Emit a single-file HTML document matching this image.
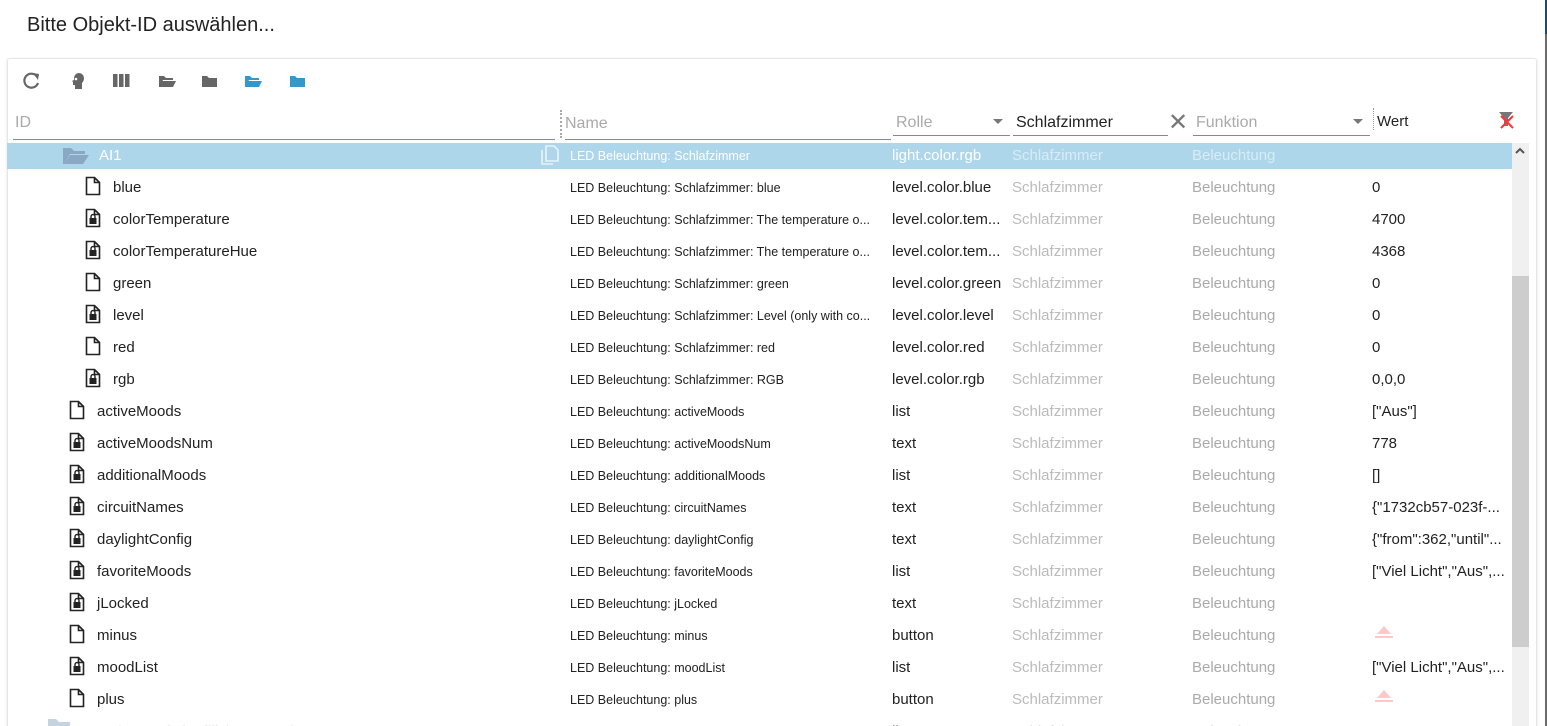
<!DOCTYPE html>
<html><head><meta charset="utf-8"><style>
*{margin:0;padding:0;box-sizing:border-box}
html,body{width:1547px;height:726px;overflow:hidden}
body{background:#fff;font-family:"Liberation Sans",sans-serif;position:relative}
.a{position:absolute;white-space:nowrap}
.title{left:27px;top:14px;font-size:20px;color:#222}
.card{left:7px;top:58px;width:1530px;height:700px;border:1px solid #e6e6e6;border-radius:3px;box-shadow:0 1px 3px rgba(0,0,0,.12)}
.edge{left:1545px;top:0;width:2px;height:726px;background:#6b6b6b}
.edge2{left:1545px;top:0;width:2px;height:34px;background:#1d4a6b}
.hdr{font-size:16px;color:#aaa}
.line{height:1px;background:#888}
.row{left:7px;width:1505px;height:32px;font-size:15px;color:#222}
.row span{position:absolute;top:9px;white-space:nowrap}
.nm{left:563px;font-size:12.5px!important;top:11px!important;max-width:320px;overflow:hidden}
.ro{left:885px;max-width:118px;overflow:hidden}
.rm{left:1005px;color:#bbb}
.fn{left:1185px;color:#aaa}
.va{left:1365px;max-width:138px;overflow:hidden}
.sel{background:#add6ea}
.sel span{color:#fff!important}
.ic{position:absolute;top:6px}
</style></head><body>
<div class="a edge"></div><div class="a edge2"></div>
<div class="a title">Bitte Objekt-ID auswählen...</div>
<div class="a card"></div>
<svg class="a" style="left:20px;top:70px" width="300" height="22" viewBox="0 0 300 22">
<path d="M17 6.5A7 7 0 1 0 18 13" fill="none" stroke="#666" stroke-width="2.2"/><path d="M13 3l6 1-1 6z" fill="#666"/>
<path d="M52 11l2-1v-2a5 5 0 0 1 10 0q0 3-2 5v6h-7v-4h-2v-3l-1-1z" fill="#666"/><circle cx="56" cy="9" r="1.3" fill="#fff"/>
<rect x="93" y="4" width="4.5" height="13" fill="#666"/><rect x="99" y="4" width="4.5" height="13" fill="#666"/><rect x="105" y="4" width="4.5" height="13" fill="#666"/>
<path d="M139 6h5l2 2h7v2h-10l-3 7h-1z M142 11h14l-3 6h-14z" fill="#666"/>
<path d="M182 6h5l2 2h8v9h-15z" fill="#666"/>
<path d="M225 6h5l2 2h7v2h-10l-3 7h-1z M228 11h14l-3 6h-14z" fill="#3399cc"/>
<path d="M270 6h5l2 2h8v9h-15z" fill="#3399cc"/>
</svg>
<div class="a hdr" style="left:15px;top:114px">ID</div>
<div class="a line" style="left:13px;top:139px;width:542px"></div>
<div class="a" style="left:560px;top:110px;height:28px;border-left:2px dotted #aaa"></div>
<div class="a hdr" style="left:565px;top:115px">Name</div>
<div class="a line" style="left:565px;top:139px;width:326px"></div>
<div class="a hdr" style="left:896px;top:114px">Rolle</div>
<div class="a" style="left:993px;top:119px;border:5px solid transparent;border-top:5px solid #777"></div>
<div class="a line" style="left:893px;top:135px;width:117px"></div>
<div class="a" style="left:1016px;top:114px;font-size:16px;color:#222">Schlafzimmer</div>
<div class="a line" style="left:1013px;top:135px;width:155px"></div>
<div class="a" style="left:1168px;top:108px;font-size:24px;color:#777">✕</div>
<div class="a hdr" style="left:1196px;top:114px">Funktion</div>
<div class="a" style="left:1353px;top:119px;border:5px solid transparent;border-top:5px solid #777"></div>
<div class="a line" style="left:1193px;top:135px;width:177px"></div>
<div class="a" style="left:1373px;top:108px;height:22px;border-left:1px dotted #999"></div>
<div class="a" style="left:1377px;top:113px;font-size:15px;color:#222">Wert</div>
<svg class="a" style="left:1498px;top:111px" width="18" height="18"><path d="M1 1h14l-5 6v8h-4v-8z" fill="#777"/><path d="M3 5l12 12M15 5L3 17" stroke="#f33" stroke-width="2"/></svg>
<div class="a" style="left:1512px;top:143px;width:17px;height:583px;background:#f0f0f0"></div>
<div class="a" style="left:1512px;top:276px;width:17px;height:371px;background:#cdcdcd"></div>
<svg class="a" style="left:1514px;top:146px" width="12" height="10"><path d="M2 7l4-4 4 4" fill="none" stroke="#555" stroke-width="2"/></svg>
<div id="rows"></div>
<script>
const F='<svg class="ic" width="16" height="20" viewBox="0 0 16 20"><path d="M1.5 1.5h8l5 5v12h-13z M9.5 1.5v5h5" fill="none" stroke="#222" stroke-width="1.6"/></svg>';
const L='<svg class="ic" width="16" height="20" viewBox="0 0 16 20"><path d="M1.5 1.5h8l5 5v12h-13z M9.5 1.5v5h5" fill="none" stroke="#222" stroke-width="1.6"/><rect x="4.5" y="10" width="7" height="6" fill="#222"/><path d="M6 10V8.5a2 2 0 0 1 4 0V10" fill="none" stroke="#222" stroke-width="1.4"/></svg>';
const B='<svg width="22" height="16" viewBox="0 0 22 16"><path d="M4 10L11 2l7 8z" fill="#ffc7c7"/><rect x="2" y="12" width="18" height="2" fill="#ffc7c7"/></svg>';
const d=[
[2,F,'blue','LED Beleuchtung: Schlafzimmer: blue','level.color.blue','0'],
[2,L,'colorTemperature','LED Beleuchtung: Schlafzimmer: The temperature o...','level.color.tem...','4700'],
[2,L,'colorTemperatureHue','LED Beleuchtung: Schlafzimmer: The temperature o...','level.color.tem...','4368'],
[2,F,'green','LED Beleuchtung: Schlafzimmer: green','level.color.green','0'],
[2,L,'level','LED Beleuchtung: Schlafzimmer: Level (only with co...','level.color.level','0'],
[2,F,'red','LED Beleuchtung: Schlafzimmer: red','level.color.red','0'],
[2,L,'rgb','LED Beleuchtung: Schlafzimmer: RGB','level.color.rgb','0,0,0'],
[1,F,'activeMoods','LED Beleuchtung: activeMoods','list','["Aus"]'],
[1,L,'activeMoodsNum','LED Beleuchtung: activeMoodsNum','text','778'],
[1,L,'additionalMoods','LED Beleuchtung: additionalMoods','list','[]'],
[1,L,'circuitNames','LED Beleuchtung: circuitNames','text','{"1732cb57-023f-...'],
[1,L,'daylightConfig','LED Beleuchtung: daylightConfig','text','{"from":362,"until"...'],
[1,L,'favoriteMoods','LED Beleuchtung: favoriteMoods','list','["Viel Licht","Aus",...'],
[1,L,'jLocked','LED Beleuchtung: jLocked','text',''],
[1,F,'minus','LED Beleuchtung: minus','button','B'],
[1,L,'moodList','LED Beleuchtung: moodList','list','["Viel Licht","Aus",...'],
[1,F,'plus','LED Beleuchtung: plus','button','B']];
let h='<div class="a row" style="top:138px"><div class="sel" style="position:absolute;left:0;top:5px;width:1505px;height:26px"></div>'+
'<svg class="ic" style="left:55px;top:9px" width="28" height="18" viewBox="0 0 28 18"><path d="M1 1h8l3 3h11v3h-15l-6 10h-1z M8 8h19l-6 9h-19z" fill="#8aa8c4"/></svg>'+
'<span style="left:92px;color:#fff">AI1</span>'+
'<svg class="ic" style="left:534px;top:7px" width="18" height="20"><path d="M5 1h8l4 4v11h-12z M1 5v14h11" fill="none" stroke="#e8f4fa" stroke-width="1.6"/></svg>'+
'<span class="nm" style="color:#fff">LED Beleuchtung: Schlafzimmer</span><span class="ro" style="color:#fff">light.color.rgb</span><span class="rm" style="color:#d8ecf6">Schlafzimmer</span><span class="fn" style="color:#d8ecf6">Beleuchtung</span></div>';
d.forEach((r,i)=>{const t=170+32*i;const ix=r[0]==2?78:62,tx=r[0]==2?106:90;
h+='<div class="a row" style="top:'+t+'px"><span style="left:'+ix+'px;top:0">'+r[1]+'</span><span style="left:'+tx+'px">'+r[2]+'</span><span class="nm">'+r[3]+'</span><span class="ro">'+r[4]+'</span><span class="rm">Schlafzimmer</span><span class="fn">Beleuchtung</span><span class="va"'+(r[5]=='B'?' style="top:6px;left:1366px"':'')+'>'+(r[5]=='B'?B:r[5])+'</span></div>';});
h+='<div class="a row" style="top:714px;opacity:.5"><svg class="ic" style="left:40px;top:4px" width="24" height="16"><path d="M1 1h8l3 3h11v12h-22z" fill="#8aa8c4"/></svg><span style="left:76px;color:#999;font-size:13px">1732cb57-023f-4f1e-ffff-d57104c94d3</span><span class="nm" style="color:#999">Nachtlicht und Moods</span><span class="ro">list</span><span class="rm">Schlafzimmer</span><span class="fn">Beleuchtung</span></div>';
document.getElementById('rows').innerHTML=h;
</script>
</body></html>
